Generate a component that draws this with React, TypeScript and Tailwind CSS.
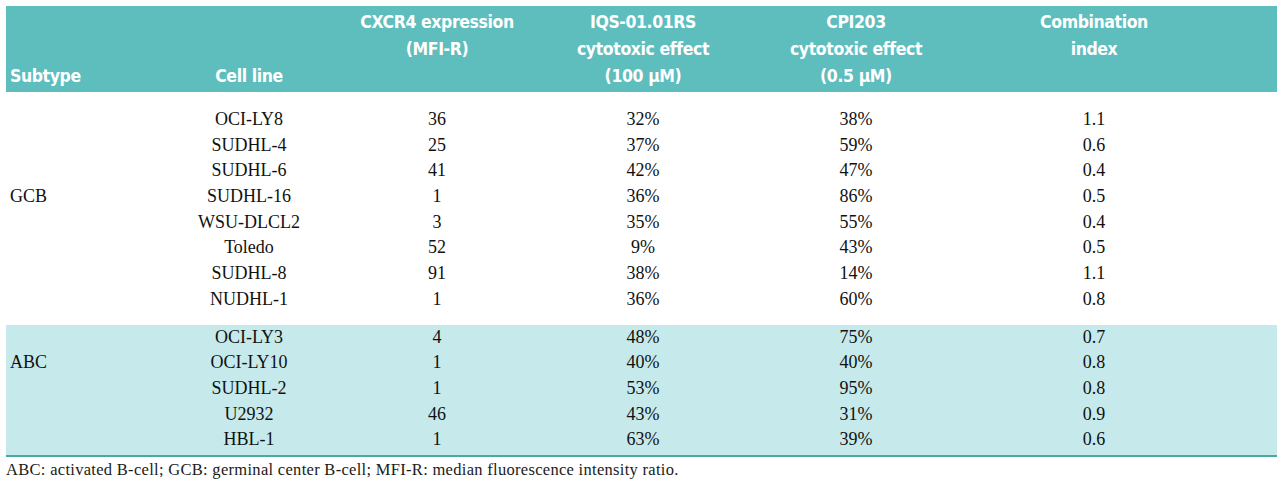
type Row = {
  subtype?: string;
  cell: string;
  cxcr4: string;
  iqs: string;
  cpi: string;
  ci: string;
};

const gcb: Row[] = [
  { cell: "OCI-LY8", cxcr4: "36", iqs: "32%", cpi: "38%", ci: "1.1" },
  { cell: "SUDHL-4", cxcr4: "25", iqs: "37%", cpi: "59%", ci: "0.6" },
  { cell: "SUDHL-6", cxcr4: "41", iqs: "42%", cpi: "47%", ci: "0.4" },
  { subtype: "GCB", cell: "SUDHL-16", cxcr4: "1", iqs: "36%", cpi: "86%", ci: "0.5" },
  { cell: "WSU-DLCL2", cxcr4: "3", iqs: "35%", cpi: "55%", ci: "0.4" },
  { cell: "Toledo", cxcr4: "52", iqs: "9%", cpi: "43%", ci: "0.5" },
  { cell: "SUDHL-8", cxcr4: "91", iqs: "38%", cpi: "14%", ci: "1.1" },
  { cell: "NUDHL-1", cxcr4: "1", iqs: "36%", cpi: "60%", ci: "0.8" },
];

const abc: Row[] = [
  { cell: "OCI-LY3", cxcr4: "4", iqs: "48%", cpi: "75%", ci: "0.7" },
  { subtype: "ABC", cell: "OCI-LY10", cxcr4: "1", iqs: "40%", cpi: "40%", ci: "0.8" },
  { cell: "SUDHL-2", cxcr4: "1", iqs: "53%", cpi: "95%", ci: "0.8" },
  { cell: "U2932", cxcr4: "46", iqs: "43%", cpi: "31%", ci: "0.9" },
  { cell: "HBL-1", cxcr4: "1", iqs: "63%", cpi: "39%", ci: "0.6" },
];

const cols = "grid grid-cols-[154px_178px_198px_214px_212px_264px_1fr]";

function BodyRow({ row }: { row: Row }) {
  return (
    <div className={`${cols} h-[25.7px] leading-[25.7px]`}>
      <div className="pl-[4px]">{row.subtype ?? ""}</div>
      <div className="text-center">{row.cell}</div>
      <div className="text-center">{row.cxcr4}</div>
      <div className="text-center">{row.iqs}</div>
      <div className="text-center">{row.cpi}</div>
      <div className="text-center">{row.ci}</div>
      <div />
    </div>
  );
}

export default function App() {
  return (
    <div className="w-[1280px] h-[493px] bg-white pl-[6px] pr-[3px] pt-[6px]">
      {/* header */}
      <div
        className={`${cols} bg-[#5ebdbd] text-white font-bold text-[17.5px] leading-[27px] pt-[2.5px] pb-[2.5px] tracking-[-0.4px]`}
        style={{ fontFamily: '"DejaVu Sans Condensed", "Liberation Sans", Arial, sans-serif' }}
      >
        <div className="flex flex-col justify-end pl-[4px]">Subtype</div>
        <div className="flex flex-col justify-end text-center">Cell line</div>
        <div className="text-center">
          <div>CXCR4 expression</div>
          <div>(MFI-R)</div>
        </div>
        <div className="text-center">
          <div>IQS-01.01RS</div>
          <div>cytotoxic effect</div>
          <div>(100 µM)</div>
        </div>
        <div className="text-center">
          <div>CPI203</div>
          <div>cytotoxic effect</div>
          <div>(0.5 µM)</div>
        </div>
        <div className="text-center">
          <div>Combination</div>
          <div>index</div>
        </div>
        <div />
      </div>

      {/* body */}
      <div
        className="text-[18px] text-[#111111]"
        style={{ fontFamily: '"Liberation Serif", "Times New Roman", serif' }}
      >
        <div className="pt-[15px] pb-[12px]">
          {gcb.map((r) => (
            <BodyRow key={r.cell} row={r} />
          ))}
        </div>
        <div className="bg-[#c6eaeb] pb-[2px] border-b-2 border-[#47a9a0]">
          {abc.map((r) => (
            <BodyRow key={r.cell} row={r} />
          ))}
        </div>
        <p className="mt-[3px] text-[16.5px] leading-[20px] tracking-[0.3px] text-[#1a1a1a]">
          ABC: activated B-cell; GCB: germinal center B-cell; MFI-R: median fluorescence intensity ratio.
        </p>
      </div>
    </div>
  );
}
